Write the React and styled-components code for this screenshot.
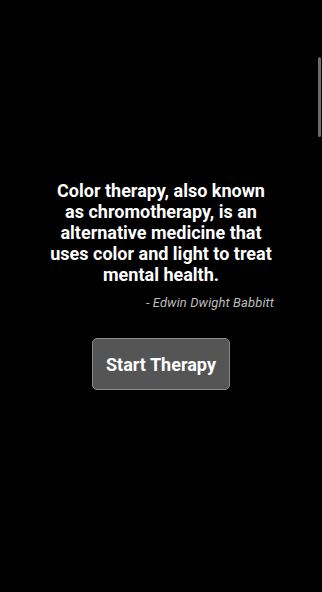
import React from 'react';
import styled, { createGlobalStyle } from 'styled-components';

const GlobalStyle = createGlobalStyle`
    html, body {
        margin: 0;
        padding: 0;
        background: #000;
        height: 100%;
    }
    body {
        font-family: Roboto, "Noto Sans", sans-serif;
        color: #fff;
    }
`;

const Screen = styled.div`
    position: relative;
    display: flex;
    flex-direction: column;
    align-items: center;
    width: 100%;
    height: 592px;
    padding-top: 180px;
    box-sizing: border-box;
    background: #000;
    overflow: hidden;
`;

const ScrollThumb = styled.div`
    position: absolute;
    top: 57px;
    right: 1px;
    width: 3px;
    height: 80px;
    border-radius: 2px;
    background: #6b6b6b;
`;

const QuoteBox = styled.div`
    display: flex;
    flex-direction: column;
    width: 226px;
`;

const QuoteText = styled.p`
    margin: 0;
    font-size: 18px;
    font-weight: 700;
    line-height: 21px;
    text-align: center;
    color: #fff;
`;

const Author = styled.div`
    margin-top: 10px;
    font-size: 13px;
    font-style: italic;
    line-height: 15px;
    letter-spacing: 0.1px;
    text-align: right;
    white-space: nowrap;
    overflow: hidden;
    color: #bdbdbd;
`;

const StartButton = styled.button`
    margin-top: 28px;
    width: 138px;
    height: 52px;
    padding: 0;
    border: 1px solid #8a8a8a;
    border-radius: 5px;
    background: #555;
    color: #fff;
    font-family: Roboto, "Noto Sans", sans-serif;
    font-size: 18px;
    font-weight: 700;
    cursor: pointer;
`;

const App = () => {
    return (
        <>
            <GlobalStyle />
            <Screen>
                <ScrollThumb />
                <QuoteBox>
                    <QuoteText>
                        Color therapy, also known as chromotherapy, is an alternative medicine that uses color and light to treat mental health.
                    </QuoteText>
                    <Author>- Edwin Dwight Babbitt</Author>
                </QuoteBox>
                <StartButton>Start Therapy</StartButton>
            </Screen>
        </>
    );
};

export default App;
